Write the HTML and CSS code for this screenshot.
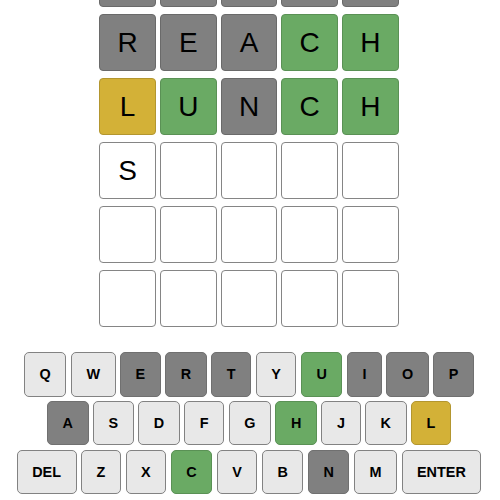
FILE: index.html
```html
<!DOCTYPE html>
<html lang="en">
<head>
<meta charset="utf-8">
<title>Wordle</title>
<link rel="stylesheet" href="styles.css">
</head>
<body>
<main class="app">
  <div class="board">
    <div class="tile absent"></div><div class="tile absent"></div><div class="tile absent"></div><div class="tile absent"></div><div class="tile absent"></div>
    <div class="tile absent">R</div><div class="tile absent">E</div><div class="tile absent">A</div><div class="tile correct">C</div><div class="tile correct">H</div>
    <div class="tile present">L</div><div class="tile correct">U</div><div class="tile absent">N</div><div class="tile correct">C</div><div class="tile correct">H</div>
    <div class="tile filled">S</div><div class="tile"></div><div class="tile"></div><div class="tile"></div><div class="tile"></div>
    <div class="tile"></div><div class="tile"></div><div class="tile"></div><div class="tile"></div><div class="tile"></div>
    <div class="tile"></div><div class="tile"></div><div class="tile"></div><div class="tile"></div><div class="tile"></div>
  </div>
  <div class="keyboard">
    <div class="krow">
      <button class="key">Q</button><button class="key">W</button><button class="key absent">E</button><button class="key absent">R</button><button class="key absent">T</button><button class="key">Y</button><button class="key correct">U</button><button class="key absent">I</button><button class="key absent">O</button><button class="key absent">P</button>
    </div>
    <div class="krow">
      <button class="key absent">A</button><button class="key">S</button><button class="key">D</button><button class="key">F</button><button class="key">G</button><button class="key correct">H</button><button class="key">J</button><button class="key">K</button><button class="key present">L</button>
    </div>
    <div class="krow">
      <button class="key">DEL</button><button class="key">Z</button><button class="key">X</button><button class="key correct">C</button><button class="key">V</button><button class="key">B</button><button class="key absent">N</button><button class="key">M</button><button class="key">ENTER</button>
    </div>
  </div>
</main>
</body>
</html>
```

FILE: styles.css
```css
html, body {
  margin: 0;
  padding: 0;
  background: #ffffff;
  overflow: hidden;
}

body {
  font-family: "Liberation Sans", Arial, sans-serif;
  color: #000;
  width: 498px;
}

.app {
  display: flex;
  flex-direction: column;
  align-items: center;
}

.board {
  margin-top: -49.7px;
  display: grid;
  grid-template-columns: repeat(5, 56.4px);
  grid-auto-rows: 56.5px;
  column-gap: 4.3px;
  row-gap: 7.5px;
}

.tile {
  box-sizing: border-box;
  border: 1px solid #858585;
  border-radius: 4px;
  background: #ffffff;
  display: flex;
  align-items: center;
  justify-content: center;
  font-size: 28px;
  font-weight: normal;
  color: #000;
}

.tile.absent {
  background: #808080;
  border-color: #6a6a6a;
}

.tile.correct {
  background: #6aaa64;
  border-color: #5a9155;
}

.tile.present {
  background: #d3b137;
  border-color: #b3962f;
}

.keyboard {
  margin-top: 25.2px;
  display: flex;
  flex-direction: column;
  align-items: center;
  gap: 4.3px;
}

.krow {
  display: flex;
  gap: 4.6px;
}

.key {
  box-sizing: border-box;
  flex: none;
  height: 44.5px;
  padding: 0 14.5px;
  border: 1px solid #828282;
  border-radius: 5px;
  background: #e8e8e8;
  font-family: "Liberation Sans", Arial, sans-serif;
  font-size: 14.4px;
  font-weight: bold;
  color: #000;
  display: flex;
  align-items: center;
  justify-content: center;
  margin: 0;
}

.key.absent {
  background: #808080;
  border-color: #707070;
}

.key.correct {
  background: #6aaa64;
  border-color: #5a9155;
}

.key.present {
  background: #d3b137;
  border-color: #b3962f;
}
```
